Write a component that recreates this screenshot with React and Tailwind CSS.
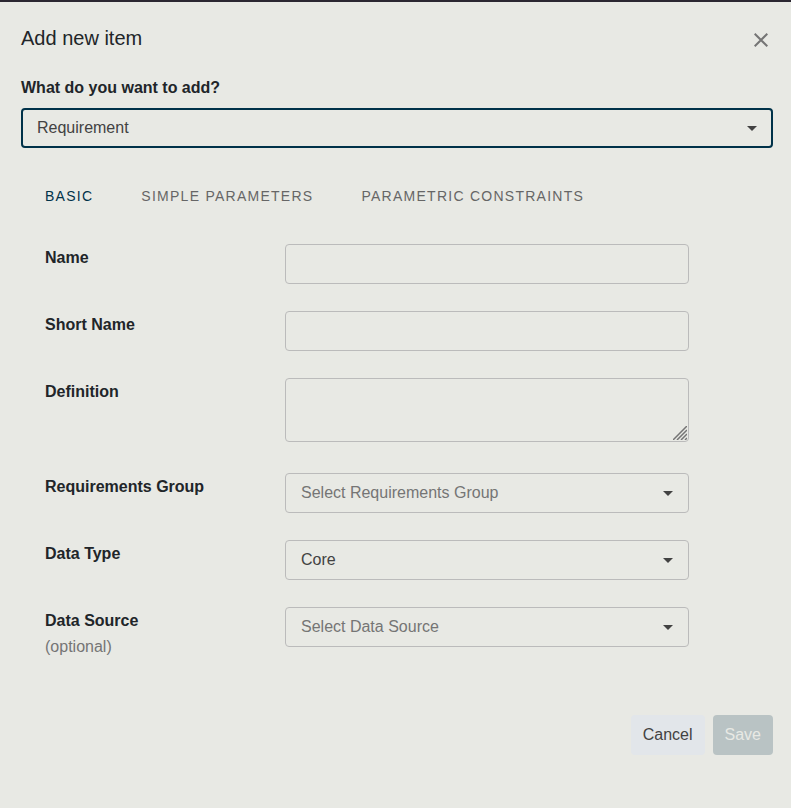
import { useState } from "react";

const TABS = ["Basic", "Simple Parameters", "Parametric Constraints"];

const Caret = ({ className }) => (
  <svg
    viewBox="0 0 10 5"
    className={`pointer-events-none absolute w-[10px] h-[5px] fill-[#424242] ${className}`}
    aria-hidden="true"
  >
    <path d="M0 0h10L5 5z" />
  </svg>
);

const FormRow = ({ id, label, hint, children }) => (
  <div className="flex">
    <div className="w-[240px] shrink-0 pt-0.5 leading-6">
      <label htmlFor={id} className="block font-bold text-[#212529]">
        {label}
      </label>
      {hint && <div className="h-0 pt-0.5 text-[#757575]">{hint}</div>}
    </div>
    <div className="relative min-w-0 flex-1">{children}</div>
  </div>
);

const SelectField = ({ id, value, onChange, placeholder, options }) => (
  <>
    <select
      id={id}
      value={value}
      onChange={(e) => onChange(e.target.value)}
      className={`block h-10 w-full appearance-none rounded border border-[#bbbbbb] bg-transparent pl-[15px] pr-8 ${
        value ? "text-[#424242]" : "text-[#757575]"
      }`}
    >
      {placeholder && <option value="">{placeholder}</option>}
      {options.map((option) => (
        <option key={option} value={option}>
          {option}
        </option>
      ))}
    </select>
    <Caret className="right-4 top-[18px]" />
  </>
);

const App = () => {
  const [itemType, setItemType] = useState("Requirement");
  const [activeTab, setActiveTab] = useState("Basic");
  const [name, setName] = useState("");
  const [shortName, setShortName] = useState("");
  const [definition, setDefinition] = useState("");
  const [group, setGroup] = useState("");
  const [dataType, setDataType] = useState("Core");
  const [dataSource, setDataSource] = useState("");

  return (
    <div className="min-h-screen border-t-2 border-[#2b2731] bg-[#e8e9e4] font-['Liberation_Sans',Arial,sans-serif] text-base text-[#212529]">
      <form className="pl-[21px] pr-[18px] pb-12 pt-5" onSubmit={(e) => e.preventDefault()}>
        <div className="flex items-start justify-between">
          <h1 className="text-xl leading-8">Add new item</h1>
          <button type="button" aria-label="Close" className="mt-1.5 p-[5px]">
            <svg viewBox="0 0 14 14" className="size-[14px]" fill="none" stroke="#757575" strokeWidth="2">
              <path d="M.7.7l12.6 12.6M13.3.7L.7 13.3" />
            </svg>
          </button>
        </div>

        <label htmlFor="item-type" className="mt-[22px] block font-bold leading-6">
          What do you want to add?
        </label>
        <div className="relative mt-2">
          <select
            id="item-type"
            value={itemType}
            onChange={(e) => setItemType(e.target.value)}
            className="block h-10 w-full appearance-none rounded border-2 border-[#003249] bg-transparent pl-[14px] pr-8 text-[#424242] outline-none"
          >
            <option>Requirement</option>
          </select>
          <Caret className="right-4 top-[18px]" />
        </div>

        <div role="tablist" className="mt-6 flex">
          {TABS.map((tab) => (
            <button
              key={tab}
              type="button"
              role="tab"
              aria-selected={activeTab === tab}
              onClick={() => setActiveTab(tab)}
              className={`h-12 px-6 text-sm uppercase tracking-[0.09em] ${
                activeTab === tab ? "text-[#003249]" : "text-[#666666]"
              }`}
            >
              {tab}
            </button>
          ))}
        </div>

        <div className="mt-6 flex flex-col gap-[27px] pl-6 pr-[84px]">
          <FormRow id="name" label="Name">
            <input
              id="name"
              type="text"
              value={name}
              onChange={(e) => setName(e.target.value)}
              className="block h-10 w-full rounded border border-[#bbbbbb] bg-transparent px-[15px]"
            />
          </FormRow>
          <FormRow id="short-name" label="Short Name">
            <input
              id="short-name"
              type="text"
              value={shortName}
              onChange={(e) => setShortName(e.target.value)}
              className="block h-10 w-full rounded border border-[#bbbbbb] bg-transparent px-[15px]"
            />
          </FormRow>
          <FormRow id="definition" label="Definition">
            <textarea
              id="definition"
              value={definition}
              onChange={(e) => setDefinition(e.target.value)}
              className="mb-1 block h-16 w-full resize-none rounded border border-[#bbbbbb] bg-transparent px-[15px] py-2"
            />
            <svg
              viewBox="0 0 14 14"
              className="pointer-events-none absolute bottom-[6px] right-[2px] size-[14px]"
              stroke="#757575"
              strokeWidth="1.5"
              aria-hidden="true"
            >
              <path d="M0 14L14 0M4 14L14 4M8 14l6-6M12 14l2-2" />
            </svg>
          </FormRow>
          <FormRow id="group" label="Requirements Group">
            <SelectField
              id="group"
              value={group}
              onChange={setGroup}
              placeholder="Select Requirements Group"
              options={[]}
            />
          </FormRow>
          <FormRow id="data-type" label="Data Type">
            <SelectField id="data-type" value={dataType} onChange={setDataType} options={["Core"]} />
          </FormRow>
          <FormRow id="data-source" label="Data Source" hint="(optional)">
            <SelectField
              id="data-source"
              value={dataSource}
              onChange={setDataSource}
              placeholder="Select Data Source"
              options={[]}
            />
          </FormRow>
        </div>

        <div className="mt-[68px] flex justify-end gap-2">
          <button type="button" className="h-10 rounded bg-[#e2e6ea] px-3 text-[#424242]">
            Cancel
          </button>
          <button type="submit" disabled className="h-10 rounded bg-[#b9c3c4] px-3 text-[#e8e9e4]">
            Save
          </button>
        </div>
      </form>
    </div>
  );
};

export default App;
